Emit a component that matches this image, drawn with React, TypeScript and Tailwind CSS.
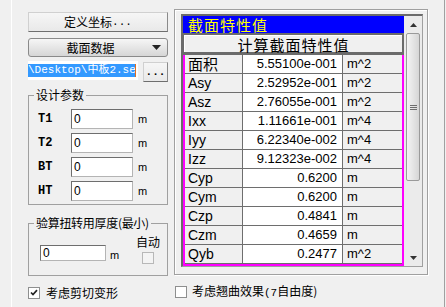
import React from "react";

const rows: [string, string, string][] = [
  ["面积", "5.55100e-001", "m^2"],
  ["Asy", "2.52952e-001", "m^2"],
  ["Asz", "2.76055e-001", "m^2"],
  ["Ixx", "1.11661e-001", "m^4"],
  ["Iyy", "6.22340e-002", "m^4"],
  ["Izz", "9.12323e-002", "m^4"],
  ["Cyp", "0.6200", "m"],
  ["Cym", "0.6200", "m"],
  ["Czp", "0.4841", "m"],
  ["Czm", "0.4659", "m"],
  ["Qyb", "0.2477", "m^2"],
  ["Qzb", "0.2612", "m^2"],
];

const params = ["T1", "T2", "BT", "HT"];

function Field({ w, h }: { w: string; h: string }) {
  return (
    <div
      className={`${w} ${h} flex items-center border border-[#b4b4b4] border-l-[#6e6e6e] border-t-[#6e6e6e] bg-white pl-[2px] font-['Liberation_Sans',sans-serif] text-[12px] leading-none text-black`}
    >
      0
    </div>
  );
}

function Unit({ className = "" }: { className?: string }) {
  return <span className={`font-['Liberation_Sans',sans-serif] text-[11px] text-black ${className}`}>m</span>;
}

function CheckBox({ checked, disabled }: { checked?: boolean; disabled?: boolean }) {
  return (
    <div
      className={
        disabled
          ? "flex h-[12px] w-[12px] items-center justify-center border border-[#b8b8b8] bg-[#f4f4f4]"
          : "flex h-[12px] w-[12px] items-center justify-center border border-[#8e8f8f] bg-white"
      }
    >
      {checked ? (
        <svg viewBox="0 0 8 8" className="h-[8px] w-[8px]">
          <path d="M1 3.5 3 5.5 7 1.2" fill="none" stroke="#222" strokeWidth="1.7" />
        </svg>
      ) : null}
    </div>
  );
}

function LeftPane() {
  return (
    <div className="flex w-[140px] flex-col pt-[12px]">
      <div className="flex h-[20px] items-center justify-center border border-[#d0d0d0] border-b-[#6e6e6e] border-r-[#8a8a8a] bg-gradient-to-b from-[#f6f6f6] to-[#e9e9e9] leading-none">
        定义坐标<span className="font-['Liberation_Mono',monospace] text-[11px]">...</span>
      </div>

      <div className="mt-[6px] flex h-[19px] items-center rounded-[3px] border border-[#8a8a8a] bg-gradient-to-b from-[#f6f6f6] to-[#d6d6d6]">
        <span className="flex-1 text-center leading-none">截面数据</span>
        <svg viewBox="0 0 9 5" className="mr-[6px] h-[5px] w-[9px]">
          <path d="M0 0h9L4.5 5z" fill="#222" />
        </svg>
      </div>

      <div className="mt-[4px] flex items-start gap-[5px]">
        <div className="flex h-[19px] w-[110px] items-center overflow-hidden bg-white">
          <span className="inline-block h-[13px] w-[107px] overflow-hidden whitespace-nowrap bg-[#3399ff] font-['Liberation_Mono','Noto_Sans_CJK_SC',monospace] text-[11px] leading-[13px] text-white">
            \Desktop\中板2.sec
          </span>
          <span className="h-[13px] w-[1px] bg-[#e07020]" />
        </div>
        <div className="mt-[1px] flex h-[20px] w-[25px] items-end justify-center border border-[#d0d0d0] border-b-[#6e6e6e] border-r-[#8a8a8a] bg-gradient-to-b from-[#f6f6f6] to-[#e9e9e9] pb-[3px] font-['Liberation_Mono',monospace] text-[11px] font-bold leading-none">
          ...
        </div>
      </div>

      <fieldset className="mt-[5px] border border-[#a0a0a0] pb-[3px] pt-[6px]">
        <legend className="ml-[5px] px-[2px] leading-[16px]">设计参数</legend>
        <div className="flex flex-col gap-[4px] pl-[9px]">
          {params.map((p) => (
            <div key={p} className="flex h-[20px] items-center">
              <span className="w-[33px] font-['Liberation_Mono',monospace] text-[12px] font-bold">{p}</span>
              <Field w="w-[62px]" h="h-[20px]" />
              <Unit className="ml-[5px]" />
            </div>
          ))}
        </div>
      </fieldset>

      <fieldset className="mt-[10px] border border-[#a0a0a0] pb-[11px] pt-[3px]">
        <legend className="ml-[5px] whitespace-nowrap px-[2px] leading-[16px] tracking-[-0.3px]">
          验算扭转用厚度(最小)
        </legend>
        <div className="flex w-full items-start pl-[11px]">
          <div className="mt-[11px] flex items-end">
            <Field w="w-[66px]" h="h-[16px]" />
            <Unit className="ml-[4px] leading-[12px]" />
          </div>
          <div className="ml-auto mr-[7px] flex flex-col items-center">
            <span className="leading-[16px]">自动</span>
            <div className="mt-[2px]">
              <CheckBox disabled />
            </div>
          </div>
        </div>
      </fieldset>

      <div className="mt-[11px] flex items-center gap-[6px]">
        <CheckBox checked />
        <span className="leading-none">考虑剪切变形</span>
      </div>
    </div>
  );
}

function Grid() {
  return (
    <div className="flex h-[253px] w-[242px] border-b border-l-2 border-r border-t-2 border-b-[#a0a0a0] border-l-[#6b6b6b] border-r-[#a0a0a0] border-t-[#6b6b6b]">
      <div className="flex w-[221px] flex-col font-['Liberation_Sans','Noto_Sans_CJK_SC',sans-serif]">
        <div className="h-[17px] bg-[#0000ff] pl-[5px] font-['Noto_Sans_CJK_SC',sans-serif] text-[15px] leading-[17px] tracking-[1px] text-[#ffff00]">
          截面特性值
        </div>
        <div className="h-[22px] bg-[#6b6b6b] pb-[3px] pl-[1px] pr-[2px] pt-[2px]">
          <div className="flex h-full items-center justify-center border-l border-t border-white bg-[#f0f0f0] font-['Noto_Sans_CJK_SC',sans-serif] text-[15px] leading-none tracking-[1px]">
            计算截面特性值
          </div>
        </div>
        <div className="h-[211px] overflow-hidden border-x-2 border-b-2 border-[#ff00ff]">
          {rows.map(([k, v, u]) => (
            <div key={k} className="grid h-[19px] grid-cols-[58px_100px_1fr] border-b border-[#6e6e6e] text-[13px] leading-[18px]">
              <div
                className={
                  k === "面积"
                    ? "border-r border-[#6e6e6e] bg-[#f0f0f0] pl-[3px] font-['Noto_Sans_CJK_SC',sans-serif] text-[15px] leading-[18px]"
                    : "border-r border-[#6e6e6e] bg-[#f0f0f0] pl-[3px] text-[14px]"
                }
              >
                {k}
              </div>
              <div className="border-r border-[#6e6e6e] bg-white pr-[5px] text-right">{v}</div>
              <div className="bg-[#f0f0f0] pl-[4px]">{u}</div>
            </div>
          ))}
        </div>
      </div>
      <div className="flex w-[18px] flex-col bg-[#ebebeb]">
        <div className="flex h-[17px] items-center justify-center">
          <svg viewBox="0 0 7 4" className="h-[4px] w-[7px]">
            <path d="M3.5 0 7 4H0z" fill="#333" />
          </svg>
        </div>
        <div className="mx-[2px] flex h-[148px] items-center justify-center rounded-[2px] border border-[#9a9a9a] bg-gradient-to-r from-[#f4f4f4] to-[#d6d6d6]">
          <div className="flex flex-col gap-[1px]">
            <div className="h-[1px] w-[7px] bg-[#6e6e6e]" />
            <div className="h-[1px] w-[7px] bg-[#6e6e6e]" />
            <div className="h-[1px] w-[7px] bg-[#6e6e6e]" />
          </div>
        </div>
        <div className="flex-1" />
        <div className="flex h-[17px] items-center justify-center">
          <svg viewBox="0 0 7 4" className="h-[4px] w-[7px]">
            <path d="M0 0h7L3.5 4z" fill="#333" />
          </svg>
        </div>
      </div>
    </div>
  );
}

function RightPane() {
  return (
    <div className="flex w-[256px] flex-col pt-[9px]">
      <div className="h-[266px] w-[254px] border border-[#a0a0a0] pl-[6px] pt-[4px] shadow-[inset_1px_1px_0_#fff,1px_1px_0_#fff]">
        <Grid />
      </div>
      <div className="mt-[10px] flex items-center gap-[5px] pl-[1px]">
        <CheckBox />
        <span className="leading-none">
          考虑翘曲效果<span className="font-['Liberation_Mono',monospace] text-[11px]">(7</span>自由度)
        </span>
      </div>
    </div>
  );
}

export default function App() {
  return (
    <div className="h-[307px] w-[446px] overflow-hidden bg-[#f0f0f0] pl-[11px] font-['Noto_Sans_CJK_SC',sans-serif] text-[12px] text-black">
      <div className="flex h-full w-[434px] gap-[6px] border-l border-r border-l-white border-r-[#a0a0a0] pl-[16px]">
        <LeftPane />
        <RightPane />
      </div>
    </div>
  );
}
